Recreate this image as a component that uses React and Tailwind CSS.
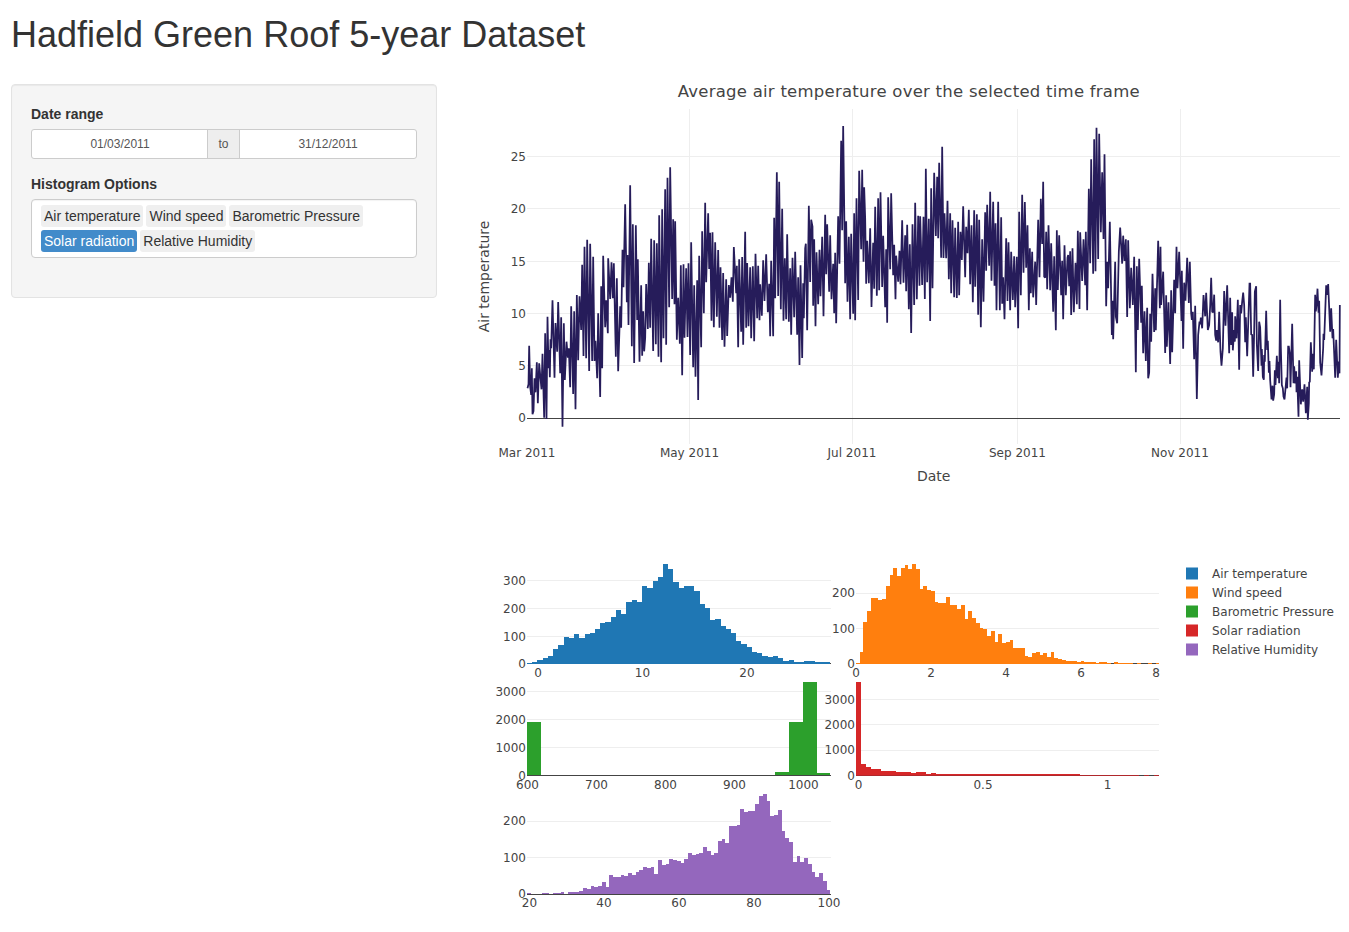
import React from "react";

const TEXT = "#444";
const GRID = "#eee";

// Temperature trace, one entry per stretch: origin plus points in thirds of a pixel.
const TRACE = [
  [470, "172,940 175,928 177,812 180,935 183,960 185,880 187,1018 190,1008 193,910 196,952 200,862 203,985 207,865 211,910 214,943 217,836 222,1028 225,775 229,1032 232,725 235,880 237,825 239,907 241,793 243,820 247,676 253,908 256,744 261,830 264,681 270,895 273,727 277,1055 281,745 284,915 289,800 293,848 296,820 300,937 303,694 309,957 312,709 316,1003 320,660 324,856 328,664 333,765 336,569 340,843 343,515 348,850 351,494 357,888 360,506 366,858 369,545 373,858 376,797 381,910 384,715 390,966 393,634 396,880 399,542 405,757 408,676 413,775 414,550 420,672 424,562 428,670 431,565 437,845 440,610 444,889 450,694 453,758 457,524 460,637 465,388 470,682 472,540 475,750 480,331 485,814 488,448 492,864 497,451 501,735 503,553 508,860 513,631 516,842 519,709 522,829 525,790 528,627 533,762 536,563 540,758 543,491 549,828 552,496 557,808 560,505 565,845 567,421 573,862 576,403 580,790 585,343 588,809 592,308 597,697 600,277 606,672 609,433 613,688 615,439 620,794 624,668 629,806 632,571 636,901 640,568 643,788 648,580 652,786 655,565 660,840 663,502"],
  [690, "3,502 9,877 12,631 16,905 21,616 24,975 27,542 33,817 36,469 41,715 45,383 48,622 54,415 57,582 60,473 64,737 67,472 71,757 75,502 80,725 84,525 88,758 91,577 96,795 99,594 103,815 108,613 111,783 116,630 120,668 124,607 128,680 131,516 138,655 140,572 144,817 147,553 153,770 156,546 159,809 165,470 168,758 171,564 175,754 180,577 183,790 188,574 192,799 196,536 201,730 204,572 208,736 210,628 215,722 219,556 223,678 228,538 233,712 237,626 240,784 243,557 249,784 252,428 255,670 260,292 264,663 267,320 272,703 276,401 280,737 284,550 288,733 291,478 296,740 300,580 303,779 307,548 312,727 315,530 321,779 324,607 328,870 331,571 336,849 339,625 341,730 345,520 347,506 351,766 356,392 360,621 363,434 367,455 369,692 372,493 376,754 379,532 384,688 388,524 391,664 396,485 400,724 405,419 408,598 411,448 417,650 420,481 424,673 429,566 432,715 435,533 438,745 444,424 448,566 453,197 456,466 459,153 465,625 468,439 472,680 476,485 480,733 483,476"],
  [850, "3,476 9,716 12,415 15,736 19,370 24,675 27,287 33,523 36,284 40,560 42,337 45,430 48,626 51,497 56,625 60,460 64,696 69,503 72,641 75,395 80,662 84,370 87,646 91,352 96,636 99,482 105,697 108,523 111,743 114,367 120,583 123,355 129,601 132,509 136,673 138,542 144,620 148,527 151,628 156,436 160,623 165,481 168,649 171,449 176,703 179,508 183,774 187,448 192,690 195,383 200,673 204,422 208,632 210,424 216,630 220,425 224,672 227,281 231,622 236,431 240,738 243,340 247,640 252,293 257,483 261,305 264,490 267,263 273,548 276,215 280,549 283,415 288,550 292,377 296,613 300,415 303,655 307,436 312,667 315,458 320,669 324,440 327,661 331,470 335,555 339,394 345,607 348,455 352,535 356,404 360,628 364,451 368,682 372,406 375,635 380,418 384,719 387,434 392,757 396,493 400,680 405,412 408,587 411,389 417,572 420,350 424,617 429,380 433,632 436,445 439,706 444,380 449,706 453,427 456,686 459,607 463,733 468,490 472,678 475,502 480,706 483,530 488,675 492,544 495,697"],
  [1015, "0,697 5,545 9,760 12,410 17,661 21,359 25,593 29,381 33,578 37,451 41,706 44,520 47,655 51,530 54,667 60,560 63,690 69,434 73,607 77,371 81,507 84,320 87,605 90,608 93,470 96,643 100,451 105,646 108,505 114,710 117,544 122,766 125,466 128,645 132,481 138,661 141,557 144,733 148,511 152,661 157,548 159,540 162,634 165,529 168,720 172,520 176,712 181,563 185,688 188,467 193,702 195,472 201,618 205,493 210,631 212,470 216,706 221,341 225,565 228,253 234,596 237,193 241,589 244,158 249,552 252,176 257,472 261,292 265,492 268,238 273,694 276,560 279,640 284,440 290,780 292,677 294,793 300,560 302,725 306,745 311,530 315,458 321,566 324,482 328,558 332,493 336,726 339,496 344,700 348,578 353,690 357,545 362,892 365,574 368,765 372,551 378,743 380,632 384,835 388,709 392,858 396,698 399,910 402,893 405,716 408,800 412,596 417,771 420,640 422,766 429,497 434,700 436,515 438,690 444,590 450,834 453,661 455,815 460,682 465,867 468,646 471,832 477,614 480,715"],
  [1175, "0,715 4,515 7,640 12,530 19,738 20,587 24,821 27,623 31,677 36,548 41,684 44,560 48,715 50,735 53,710 57,853 60,692 65,972 69,780 73,740 75,748 77,728 81,760 85,660 90,724 93,653 98,765 102,750 105,693 108,608 111,710 114,712 117,659 120,780 123,797 125,765 129,802 132,710 136,830 139,872 143,820 147,648 151,752 156,631 162,835 165,668 168,810 171,712 173,826 177,765 179,800 180,724 184,790 188,674 192,884 195,690 198,715 201,680 204,653 207,690 210,802 212,727 216,844 223,626 225,626 228,778 231,780 234,905 237,770 239,650 240,646 243,634 245,808 249,888 252,740 255,757 259,872 260,822 263,906 266,914 267,840 269,860 273,707 276,825 278,797 281,893 283,858 285,915 289,973 292,932 294,977 297,958 299,886 301,930 305,842 308,910 310,860 312,925 315,674 317,815 320,930 323,940 325,965 328,973 334,908 336,940 339,815 341,815 344,837 346,937 351,746 355,925 357,874 360,925 363,889 364,952 366,905 370,1025 372,856 377,988 381,943 384,980 388,928 392,1015 396,935 398,1034 401,985 402,922 404,920 407,802 411,890 413,836 416,883 420,659 422,709 425,680 427,641 430,713 432,677 435,862 439,901 444,820 445,776 447,795 453,631 456,660 459,627 465,770 468,700 472,790 474,762 477,835 480,908 483,794 488,908 491,860 493,895 494,690"],
];

// Histograms: "left:top" pairs in thirds of a pixel from (ox, oy), the last left edge ends the series.
const HISTS = [
  {
    color: "#1f77b4", ox: 485, oy: 550, bottom: 342, x1: 527, x2: 831, base: 663.5, labelY: 677,
    ys: [["300", 580.5, 584.5], ["200", 608.5, 612.5], ["100", 636.5, 640.5], ["0", 663.5, 667.5]],
    xs: [["0", 538], ["10", 642.5], ["20", 747]],
    bars: "126:339 141:336 156:330 174:324 189:318 204:297 219:285 237:261 252:264 267:252 282:264 300:252 315:249 330:237 345:219 360:216 378:201 393:180 408:192 423:156 441:150 456:156 471:108 486:114 504:93 519:81 534:42 549:57 564:96 582:114 597:108 627:123 645:162 660:174 675:210 690:207 708:228 723:237 738:249 753:273 768:282 786:291 801:306 816:309 831:318 849:321 864:318 879:324 894:333 912:330 927:336 957:333 990:336 1035:342",
  },
  {
    color: "#ff7f0e", ox: 820, oy: 550, bottom: 342, x1: 856, x2: 1159, base: 663.5, labelY: 677,
    ys: [["200", 593.5, 597], ["100", 628.5, 632.5], ["0", 663.5, 667.5]],
    xs: [["0", 856], ["2", 931], ["4", 1006], ["6", 1081], ["8", 1156]],
    bars: "108:339 120:306 129:216 141:183 153:144 174:150 186:147 198:108 210:75 219:54 231:78 243:54 255:45 264:57 276:42 288:57 300:117 309:108 321:120 333:123 345:156 354:159 378:141 390:165 411:177 423:165 435:207 444:183 456:204 468:219 480:234 489:237 501:258 513:243 525:276 534:252 546:279 558:276 570:270 579:294 615:318 624:321 636:309 648:306 660:315 669:309 681:321 693:306 702:324 714:327 726:330 738:333 771:336 783:333 792:336 828:339 837:336 861:339 873:342 882:336 894:339 939:342 951:339 963:342 984:339 996:342 1008:339 1017:342",
  },
  {
    color: "#2ca02c", ox: 485, oy: 670, bottom: 315, x1: 527, x2: 831, base: 775.5, labelY: 789,
    ys: [["3000", 691.5, 695.5], ["2000", 719.5, 723.5], ["1000", 747.5, 751.5], ["0", 775.5, 779.5]],
    xs: [["600", 527.5], ["700", 596.5], ["800", 665.5], ["900", 734.5], ["1000", 803.5]],
    bars: "126:156 168:315 870:306 912:156 954:36 996:309 1035:315",
  },
  {
    color: "#d62728", ox: 820, oy: 670, bottom: 315, x1: 856, x2: 1159, base: 775.5, labelY: 789, tint: true,
    ys: [["3000", 699.5, 703.5], ["2000", 724.5, 728.5], ["1000", 750.5, 754], ["0", 775.5, 779.5]],
    xs: [["0", 858.5], ["0.5", 983], ["1", 1107.5]],
    bars: "108:36 123:282 138:291 153:297 183:303 228:306 273:309 288:306 318:312 333:309 348:312 780:315 1017:315",
  },
  {
    color: "#9467bd", ox: 485, oy: 785, bottom: 327, x1: 527, x2: 831, base: 894.5, labelY: 907,
    ys: [["200", 821.5, 825], ["100", 857.5, 861.5], ["0", 894.5, 898]],
    xs: [["20", 529.5], ["40", 604], ["60", 679], ["80", 754], ["100", 829]],
    bars: "126:324 138:327 171:324 192:327 204:324 228:321 237:327 249:321 282:318 294:309 306:312 318:303 327:306 339:303 351:291 363:306 372:270 384:276 408:270 417:273 429:264 441:270 453:261 462:255 474:246 486:249 498:246 507:267 519:225 531:240 543:237 552:222 564:225 576:228 588:234 597:222 609:204 621:210 633:207 642:204 654:186 666:198 678:210 687:204 699:168 711:162 720:174 732:123 756:120 765:72 777:81 789:78 810:57 822:33 834:27 846:48 855:93 867:90 879:75 891:138 900:159 912:171 924:231 936:213 945:231 957:219 969:237 981:261 990:276 1002:264 1014:288 1026:315 1035:327",
  },
];

const LEGEND = [
  ["Air temperature", "#1f77b4", 95.5],
  ["Wind speed", "#ff7f0e", 70],
  ["Barometric Pressure", "#2ca02c", 122],
  ["Solar radiation", "#d62728", 88.5],
  ["Relative Humidity", "#9467bd", 106],
];

const YTICKS = [["25", 156.5], ["20", 208.5], ["15", 261.5], ["10", 313.5], ["5", 365.5], ["0", 418.5]];
const XTICKS = [["Mar 2011", 527], ["May 2011", 689.5], ["Jul 2011", 852], ["Sep 2011", 1017.5], ["Nov 2011", 1180]];

function tracePoints() {
  return TRACE.map(([ox, pts]) =>
    pts.split(" ").map((p) => {
      const [x, y] = p.split(",").map(Number);
      return `${(ox + (x + 0.5) / 3).toFixed(2)},${(75 + y / 3).toFixed(2)}`;
    }).join(" ")
  ).join(" ");
}

function histPath({ ox, oy, bottom, bars }) {
  const list = bars.split(" ").map((b) => b.split(":").map(Number));
  const X = (v) => ox + v / 3;
  const Y = (v) => oy + v / 3;
  let d = `M${X(list[0][0])} ${Y(bottom)}`;
  list.forEach(([x, top], i) => {
    d += `V${Y(top)}`;
    if (i < list.length - 1) d += `H${X(list[i + 1][0])}`;
    else d += `V${Y(bottom)}`;
  });
  return d + "Z";
}

function LineChart() {
  return (
    <svg className="block font-['DejaVu_Sans',Verdana,sans-serif]" width="882" height="421" viewBox="467 74 882 421" fill={TEXT} fontSize="12">
      <text x="908.7" y="97" fontSize="16.5" textAnchor="middle" textLength="462" lengthAdjust="spacing">Average air temperature over the selected time frame</text>
      <g shapeRendering="crispEdges">
        {XTICKS.slice(1).map(([t, x]) => (
          <path key={t} d={`M${Math.floor(x) + 0.5} 109V444`} stroke={GRID} />
        ))}
        {YTICKS.slice(0, 5).map(([t, y]) => (
          <path key={t} d={`M527 ${y}H1340`} stroke={GRID} />
        ))}
        <path d="M527 418.5H1340" stroke={TEXT} />
      </g>
      <polyline points={tracePoints()} fill="none" stroke="#261c5a" strokeWidth="1.75" strokeMiterlimit="2" />
      {YTICKS.map(([t, y]) => (
        <text key={t} x="526" y={t === "0" ? y + 3.5 : y + 4} textAnchor="end">{t}</text>
      ))}
      {XTICKS.map(([t, x]) => (
        <text key={t} x={x} y="457" textAnchor="middle">{t}</text>
      ))}
      <text x="933.7" y="481" fontSize="14" textAnchor="middle">Date</text>
      <text transform="translate(489 276.5) rotate(-90)" fontSize="14" textAnchor="middle">Air temperature</text>
    </svg>
  );
}

function Histogram({ h }) {
  const axis = <path d={`M${h.x1} ${h.base}H${h.x2}`} stroke={TEXT} />;
  const under = h.bottom === 342;
  return (
    <g>
      <g shapeRendering="crispEdges">
        {h.ys.filter(([t]) => t !== "0").map(([t, y]) => (
          <path key={t} d={`M${h.x1} ${y}H${h.x2}`} stroke={GRID} />
        ))}
        {under && axis}
        <path d={histPath(h)} fill={h.color} />
        {!under && axis}
        {h.tint && <path d="M856 775.5H1139M1144 775.5H1149M1154 775.5H1159" stroke="#b0282c" />}
      </g>
      {h.ys.map(([t, , ty]) => (
        <text key={t} x={h.x1 - 1} y={ty} textAnchor="end">{t}</text>
      ))}
      {h.xs.map(([t, x]) => (
        <text key={t} x={x} y={h.labelY} textAnchor="middle">{t}</text>
      ))}
    </g>
  );
}

function Histograms() {
  return (
    <svg className="block font-['DejaVu_Sans',Verdana,sans-serif]" width="882" height="437" viewBox="467 495 882 437" fill={TEXT} fontSize="12">
      {HISTS.map((h) => <Histogram key={h.color} h={h} />)}
      {LEGEND.map(([t, c, w], i) => (
        <g key={t}>
          <rect x="1186" y={567.5 + i * 19} width="12" height="12" fill={c} />
          <text x="1212" y={578 + i * 19} textLength={w}>{t}</text>
        </g>
      ))}
    </svg>
  );
}

function Tag({ children, active }) {
  return (
    <span className={`h-[22px] rounded-[3px] px-[3px] text-sm leading-[22px] whitespace-nowrap ${active ? "bg-[#428bca] text-white" : "bg-[#efefef] text-[#333]"}`}>
      {children}
    </span>
  );
}

export default function App() {
  return (
    <div className="h-[932px] w-[1349px] overflow-hidden bg-white font-['Liberation_Sans',Arial,sans-serif] text-[#333]">
      <h1 className="h-[74px] pt-[15px] pl-[11px] text-[36px] leading-[40px] font-normal">Hadfield Green Roof 5-year Dataset</h1>
      <div className="flex">
        <div className="w-[467px] shrink-0 pt-[10px] pl-[11px]">
          <form className="h-[214px] w-[426px] rounded-[4px] border border-[#e3e3e3] bg-[#f5f5f5] px-[19px] pt-[19px] shadow-[inset_0_1px_1px_rgba(0,0,0,0.05)]">
            <div className="mb-[5px] text-sm leading-5 font-bold">Date range</div>
            <div className="flex h-[30px] rounded-[3px] border border-[#ccc] bg-white text-center text-xs leading-7 text-[#555]">
              <div className="w-[175px]"><span className="pl-px">01/03/2011</span></div>
              <div className="w-[33px] border-x border-[#ccc] bg-[#eee]">to</div>
              <div className="flex-1">31/12/2011</div>
            </div>
            <div className="mt-[15px] mb-[5px] text-sm leading-5 font-bold">Histogram Options</div>
            <div className="flex h-[59px] flex-wrap content-start gap-[3px] rounded-[4px] border border-[#ccc] bg-white pt-[5px] pl-[9px] shadow-[inset_0_1px_1px_rgba(0,0,0,0.05)]">
              <Tag>Air temperature</Tag>
              <Tag>Wind speed</Tag>
              <Tag>Barometric Pressure</Tag>
              <Tag active>Solar radiation</Tag>
              <Tag>Relative Humidity</Tag>
            </div>
          </form>
        </div>
        <div className="w-[882px] shrink-0">
          <LineChart />
          <Histograms />
        </div>
      </div>
    </div>
  );
}
